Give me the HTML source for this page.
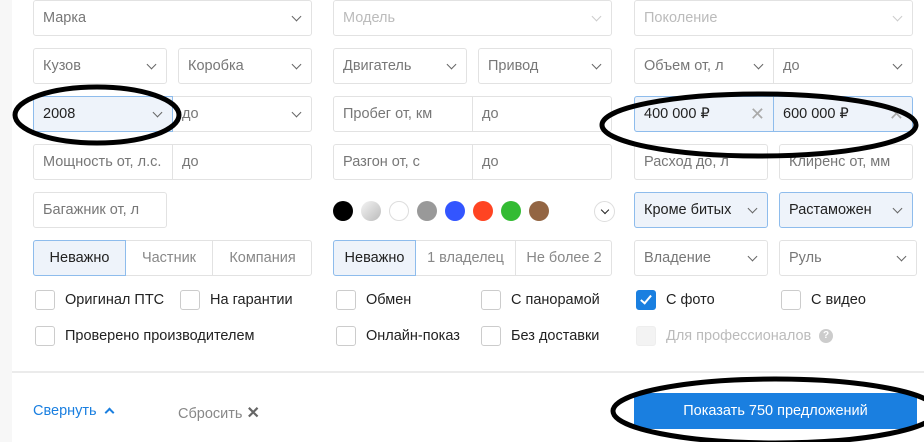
<!DOCTYPE html>
<html><head><meta charset="utf-8"><style>
*{box-sizing:border-box;margin:0;padding:0}
body{width:924px;height:442px;overflow:hidden;background:#fff;font-family:"Liberation Sans",sans-serif;font-size:14.5px;color:#333;position:relative}
.b{position:absolute;height:36px;border:1px solid #e2e2e2;border-radius:3px;padding-left:9px;line-height:34px;color:#777;background:#fff;white-space:nowrap;overflow:hidden}
.f{background:#eef3fa;border-color:#8ebcec;color:#222}
.dis{color:#bbb}
.ch{position:absolute;right:11px;top:12px;width:7px;height:7px;border-right:1.8px solid #666;border-bottom:1.8px solid #666;transform:rotate(45deg)}
.x{position:absolute;right:8px;top:0;color:#aaa;font-size:18px}
.c{position:absolute;width:20px;height:20px;border-radius:50%;top:201px}
.cb{position:absolute;width:20px;height:20px;border:1px solid #ccc;border-radius:3px;background:#fff}
.l{position:absolute;color:#222}
</style></head><body>
<div style="position:absolute;left:0;top:0;width:12px;height:442px;background:#f7f7f7"></div>
<div style="position:absolute;left:12px;top:371px;width:912px;height:2px;background:#ebebeb"></div>

<div class="b" style="left:33px;top:0;width:279px">Марка<i class="ch"></i></div>
<div class="b dis" style="left:333px;top:0;width:279px">Модель<i class="ch" style="border-color:#ccc"></i></div>
<div class="b dis" style="left:634px;top:0;width:279px">Поколение<i class="ch" style="border-color:#ccc"></i></div>

<div class="b" style="left:33px;top:48px;width:134px">Кузов<i class="ch"></i></div>
<div class="b" style="left:178px;top:48px;width:134px">Коробка<i class="ch"></i></div>
<div class="b" style="left:333px;top:48px;width:134px">Двигатель<i class="ch"></i></div>
<div class="b" style="left:478px;top:48px;width:134px">Привод<i class="ch"></i></div>
<div class="b" style="left:634px;top:48px;width:140px;border-radius:3px 0 0 3px">Объем от, л<i class="ch"></i></div>
<div class="b" style="left:773px;top:48px;width:140px;border-radius:0 3px 3px 0">до<i class="ch"></i></div>

<div class="b" style="left:172px;top:96px;width:140px;border-radius:0 3px 3px 0">до<i class="ch"></i></div>
<div class="b f" style="left:33px;top:96px;width:140px;border-radius:3px 0 0 3px">2008<i class="ch"></i></div>
<div class="b" style="left:333px;top:96px;width:140px;border-radius:3px 0 0 3px">Пробег от, км</div>
<div class="b" style="left:472px;top:96px;width:140px;border-radius:0 3px 3px 0">до</div>
<div class="b f" style="left:634px;top:96px;width:140px;border-radius:3px 0 0 3px">400 000 ₽<span class="x">✕</span></div>
<div class="b f" style="left:773px;top:96px;width:140px;border-radius:0 3px 3px 0">600 000 ₽<span class="x">✕</span></div>

<div class="b" style="left:33px;top:144px;width:140px;border-radius:3px 0 0 3px">Мощность от, л.с.</div>
<div class="b" style="left:172px;top:144px;width:140px;border-radius:0 3px 3px 0">до</div>
<div class="b" style="left:333px;top:144px;width:140px;border-radius:3px 0 0 3px">Разгон от, с</div>
<div class="b" style="left:472px;top:144px;width:140px;border-radius:0 3px 3px 0">до</div>
<div class="b" style="left:634px;top:144px;width:134px">Расход до, л</div>
<div class="b" style="left:779px;top:144px;width:134px">Клиренс от, мм</div>

<div class="b" style="left:33px;top:192px;width:134px">Багажник от, л</div>
<div class="c" style="left:333px;background:#000"></div>
<div class="c" style="left:361px;background:linear-gradient(135deg,#f4f4f4,#bbb)"></div>
<div class="c" style="left:389px;background:#fff;border:1px solid #ddd"></div>
<div class="c" style="left:417px;background:#999"></div>
<div class="c" style="left:445px;background:#3355ff"></div>
<div class="c" style="left:473px;background:#ff4422"></div>
<div class="c" style="left:501px;background:#33bb33"></div>
<div class="c" style="left:529px;background:#936543"></div>
<div style="position:absolute;left:594px;top:201px;width:21px;height:21px;border:1px solid #ddd;border-radius:50%"><i class="ch" style="right:6px;top:5px;width:6px;height:6px;border-color:#222"></i></div>
<div class="b f" style="left:634px;top:192px;width:134px">Кроме битых<i class="ch"></i></div>
<div class="b f" style="left:779px;top:192px;width:134px">Растаможен<i class="ch"></i></div>

<div class="b" style="left:33px;top:240px;width:279px;padding:0"></div>
<div class="b f" style="left:33px;top:240px;width:93px;padding:0;text-align:center;border-radius:3px 0 0 3px">Неважно</div>
<div style="position:absolute;left:126px;top:240px;width:87px;line-height:36px;text-align:center;color:#888;border-right:1px solid #e2e2e2;height:36px">Частник</div>
<div style="position:absolute;left:213px;top:240px;width:99px;line-height:36px;text-align:center;color:#888">Компания</div>
<div class="b" style="left:333px;top:240px;width:279px;padding:0"></div>
<div class="b f" style="left:333px;top:240px;width:83px;padding:0;text-align:center;border-radius:3px 0 0 3px">Неважно</div>
<div style="position:absolute;left:416px;top:240px;width:100px;line-height:36px;text-align:center;color:#888;border-right:1px solid #e2e2e2;height:36px">1 владелец</div>
<div style="position:absolute;left:516px;top:240px;width:96px;line-height:36px;text-align:center;color:#888">Не более 2</div>
<div class="b" style="left:634px;top:240px;width:134px">Владение<i class="ch"></i></div>
<div class="b" style="left:779px;top:240px;width:138px">Руль<i class="ch"></i></div>

<div class="cb" style="left:35px;top:290px"></div><div class="l" style="left:65px;top:292px">Оригинал ПТС</div>
<div class="cb" style="left:180px;top:290px"></div><div class="l" style="left:210px;top:292px">На гарантии</div>
<div class="cb" style="left:336px;top:290px"></div><div class="l" style="left:366px;top:292px">Обмен</div>
<div class="cb" style="left:481px;top:290px"></div><div class="l" style="left:511px;top:292px">С панорамой</div>
<div class="cb" style="left:636px;top:290px;background:#1a7fe0;border-color:#1a7fe0"><i style="position:absolute;left:6px;top:2px;width:6px;height:11px;border-right:2px solid #fff;border-bottom:2px solid #fff;transform:rotate(40deg)"></i></div><div class="l" style="left:666px;top:292px">С фото</div>
<div class="cb" style="left:781px;top:290px"></div><div class="l" style="left:811px;top:292px">С видео</div>
<div class="cb" style="left:35px;top:326px"></div><div class="l" style="left:65px;top:328px">Проверено производителем</div>
<div class="cb" style="left:336px;top:326px"></div><div class="l" style="left:366px;top:328px">Онлайн-показ</div>
<div class="cb" style="left:481px;top:326px"></div><div class="l" style="left:511px;top:328px">Без доставки</div>
<div class="cb" style="left:636px;top:326px;background:#f3f3f3;border-color:#eee"></div><div class="l" style="left:666px;top:328px;color:#bbb">Для профессионалов</div>
<div style="position:absolute;left:819px;top:329px;width:14px;height:14px;border-radius:50%;background:#ccc;color:#fff;font-size:10px;text-align:center;line-height:14px;font-weight:bold">?</div>

<div style="position:absolute;left:33px;top:403px;color:#1a7fe0">Свернуть</div>
<i style="position:absolute;left:106px;top:409px;width:7px;height:7px;border-left:2px solid #1a7fe0;border-top:2px solid #1a7fe0;transform:rotate(45deg)"></i>
<div style="position:absolute;left:178px;top:403px;color:#888">Сбросить <span style="color:#666;font-size:16px;font-weight:bold">✕</span></div>
<div style="position:absolute;left:634px;top:393px;width:283px;height:36px;background:#1a7fe0;border-radius:3px;color:#fff;text-align:center;line-height:36px">Показать 750 предложений</div>

<svg width="924" height="442" style="position:absolute;left:0;top:0" fill="none" stroke="#000" stroke-width="5">
<ellipse cx="97" cy="115" rx="82" ry="28"/>
<ellipse cx="759" cy="125" rx="157" ry="31"/>
<ellipse cx="775" cy="411" rx="162" ry="32"/>
</svg>
</body></html>
